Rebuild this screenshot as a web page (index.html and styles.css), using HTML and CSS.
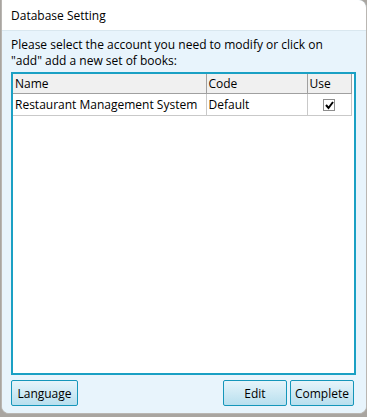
FILE: index.html
```html
<!DOCTYPE html>
<html lang="en">
<head>
    <meta charset="UTF-8">
    <title>Database Setting</title>
    <link rel="stylesheet" href="styles.css">
</head>
<body>
    <div class="dialog">
        <div class="title-bar">Database Setting</div>
        <div class="dialog-body">
            <p class="prompt">Please select the account you need to modify or click on "add" add a new set of books:</p>
            <div class="table-box">
                <table class="books">
                    <thead>
                        <tr>
                            <th class="col-name">Name</th>
                            <th class="col-code">Code</th>
                            <th class="col-use">Use</th>
                        </tr>
                    </thead>
                    <tbody>
                        <tr>
                            <td>Restaurant Management System</td>
                            <td>Default</td>
                            <td class="use-cell"><span class="check"><svg width="11" height="11" viewBox="0 0 11 11"><path d="M2 5 L4.5 8 L9 2" fill="none" stroke="#000" stroke-width="2"/></svg></span></td>
                        </tr>
                    </tbody>
                </table>
            </div>
            <div class="button-row">
                <button class="btn btn-wide">Language</button>
                <div class="spacer"></div>
                <button class="btn">Edit</button>
                <button class="btn">Complete</button>
            </div>
        </div>
    </div>
</body>
</html>
```
FILE: styles.css
```css
* {
    margin: 0;
    padding: 0;
    box-sizing: border-box;
}

body {
    font-family: "Open Sans", "Noto Sans", sans-serif;
    font-size: 12px;
    color: #000;
    background: #a9a5a0;
    width: 367px;
    height: 417px;
    overflow: hidden;
}

.dialog {
    width: 366px;
    height: 414px;
    margin-left: 1px;
    border: 1px solid #b9b6b2;
    border-top: none;
    border-radius: 0 8px 8px 8px;
    background: #e3f2fb;
    overflow: hidden;
    display: flex;
    flex-direction: column;
}

.title-bar {
    height: 31px;
    background: #fff;
    padding: 7px 0 0 9px;
    border-radius: 0 8px 0 0;
    border-bottom: 1px solid #d9e7ef;
}

.dialog-body {
    flex: 1;
    background: #e8f4fc;
    padding: 6px 10px 6px 9px;
    display: flex;
    flex-direction: column;
}

.prompt {
    line-height: 16px;
    height: 35px;
}

.table-box {
    flex: 1;
    background: #fff;
    border: 2px solid #1aa0c4;
    padding: 0 2px 0 0;
}

.books {
    width: 100%;
    border-collapse: collapse;
    table-layout: fixed;
}

.books th,
.books td {
    text-align: left;
    font-weight: normal;
    padding: 0 2px;
    border-right: 1px solid #c9c9c9;
    border-bottom: 1px solid #c9c9c9;
    white-space: nowrap;
}

.books th {
    height: 19px;
    background: #f0f0f0;
    border-bottom-color: #a0a0a0;
    border-right-color: #a0a0a0;
}

.books td {
    height: 22px;
}

.col-name { width: 193px; }
.col-code { width: 101px; }

.books .use-cell {
    text-align: center;
}

.check {
    display: inline-block;
    width: 12px;
    height: 12px;
    border: 1px solid #8d8d8d;
    background: #fff;
    vertical-align: middle;
    line-height: 0;
}

.button-row {
    display: flex;
    gap: 3px;
    padding: 5px 2px 0 0;
    height: 32px;
}

.spacer {
    flex: 1;
}

.btn {
    font-family: inherit;
    font-size: 12px;
    width: 64px;
    height: 26px;
    border: 1px solid #1596ba;
    border-radius: 2px;
    background: linear-gradient(#e6f4fa, #b8dfee);
    color: #000;
}

.btn-wide {
    width: 67px;
}
```
